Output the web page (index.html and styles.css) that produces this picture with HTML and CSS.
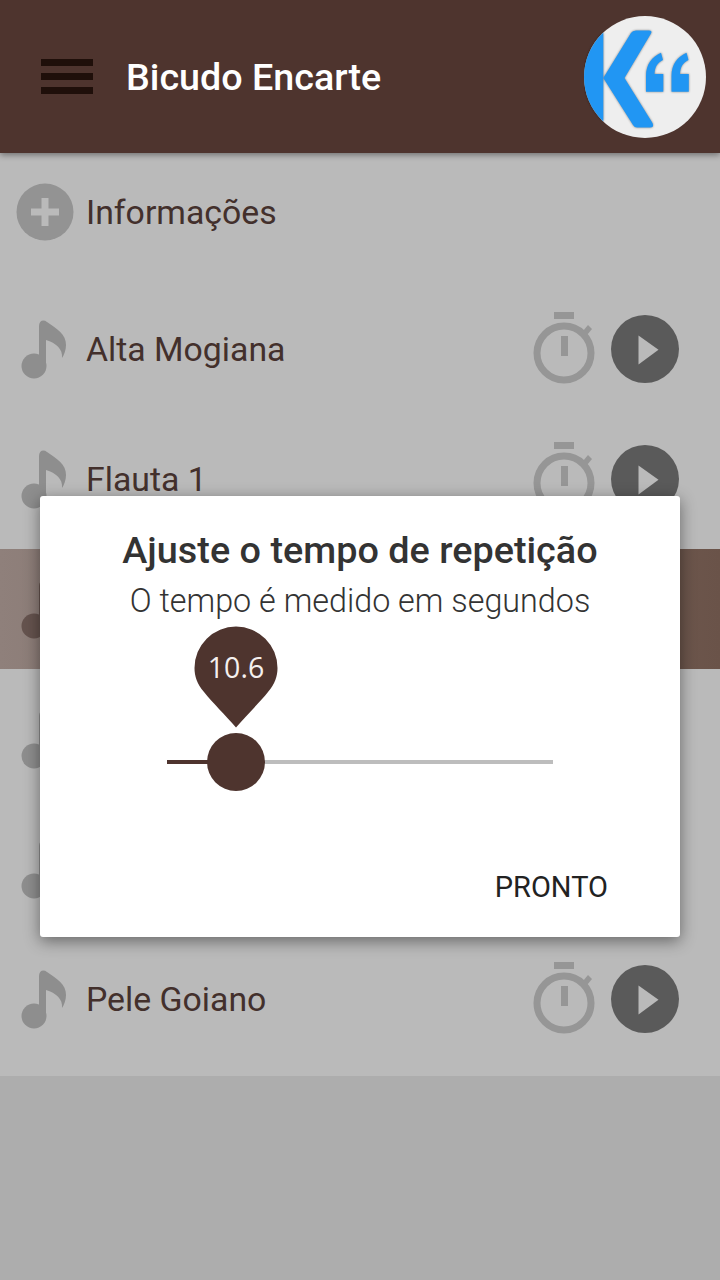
FILE: index.html
```html
<!DOCTYPE html>
<html lang="pt">
<head>
<meta charset="utf-8">
<title>Bicudo Encarte</title>
<link rel="stylesheet" href="styles.css">
</head>
<body>
<svg class="defs" width="0" height="0">
	<defs>
		<symbol id="note" viewBox="0 0 48 60">
			<circle cx="14" cy="47" r="12.5"/>
			<path d="M19 47V7C19 2 23 0 27 3C37 10 46 15 46 26C46 31 44 36 42 39C43 30 36 24 26 21V47Z"/>
		</symbol>
		<symbol id="timer" viewBox="0 0 64 74">
			<rect x="22" y="0" width="20" height="7"/>
			<circle cx="32" cy="41" r="27" fill="none" stroke="#969696" stroke-width="7"/>
			<rect x="29" y="24" width="7" height="20"/>
			<path d="M51 19L56 13L60 17L55 23Z"/>
		</symbol>
		<symbol id="play" viewBox="0 0 68 68">
			<circle cx="34" cy="34" r="34" fill="#5a5a5a"/>
			<path d="M27.500 20.500L47.500 34.800L27.500 49.500Z" fill="#bababa"/>
		</symbol>
	</defs>
</svg>

<div class="appbar">
	<div class="menu"><span></span><span></span><span></span></div>
	<div class="appbar-title">Bicudo Encarte</div>
	<svg class="logo" viewBox="0 0 122 122">
		<circle cx="61" cy="61" r="61" fill="#eeeeee"/>
		<g class="logo-mark">
			<path d="M19.300 16.500A61 61 0 0 0 19.300 105.500Z"/>
			<path d="M19.300 62L47 17Q48.500 14.500 52 14.500H65Q68.500 14.500 67 17.500L40.500 62L68.500 107Q70.500 111.500 66 111.500H53Q50.500 111.500 49 109Z"/>
			<path d="M62 75.700V60C62 48 68 41 77 36.700L79 44C73 47 71 51 70.500 58H79.300V75.700Z"/>
			<path d="M87.500 75.700V60C87.500 48 93.500 41 102.500 36.700L104.500 44C98.500 47 96.500 51 96 58H104.800V75.700Z"/>
		</g>
	</svg>
</div>

<div class="list">
	<div class="info-row">
		<svg class="plus" viewBox="0 0 58 58">
			<circle cx="29" cy="29" r="28.500" fill="#939393"/>
			<path d="M25.500 15h7v10.500H43v7H32.500V43h-7V32.500H15v-7h10.500z" fill="#bababa"/>
		</svg>
		<div class="label">Informações</div>
	</div>

	<div class="row">
		<svg class="note"><use href="#note"/></svg>
		<div class="label">Alta Mogiana</div>
		<svg class="timer"><use href="#timer"/></svg>
		<svg class="play"><use href="#play"/></svg>
	</div>
	<div class="row">
		<svg class="note"><use href="#note"/></svg>
		<div class="label">Flauta 1</div>
		<svg class="timer"><use href="#timer"/></svg>
		<svg class="play"><use href="#play"/></svg>
	</div>
	<div class="row selected">
		<svg class="note"><use href="#note"/></svg>
	</div>
	<div class="row">
		<svg class="note"><use href="#note"/></svg>
	</div>
	<div class="row">
		<svg class="note"><use href="#note"/></svg>
	</div>
	<div class="row">
		<svg class="note"><use href="#note"/></svg>
		<div class="label">Pele Goiano</div>
		<svg class="timer"><use href="#timer"/></svg>
		<svg class="play"><use href="#play"/></svg>
	</div>
</div>

<div class="dialog">
	<div class="dialog-title">Ajuste o tempo de repetição</div>
	<div class="dialog-text">O tempo é medido em segundos</div>
	<div class="slider">
		<div class="track"><div class="track-fill" style="width: 69px"></div></div>
		<div class="thumb" style="left: 69px"></div>
		<div class="pin" style="left: 69px">
			<svg class="pin-shape" viewBox="0 0 84 102">
				<path d="M42 101.500C32 90 18 76 10 66C3 58 0.500 50 0.500 42A41.500 41.500 0 0 1 83.500 42C83.500 50 81 58 74 66C66 76 52 90 42 101.500Z"/>
			</svg>
			<span class="pin-value">10.6</span>
		</div>
	</div>
	<div class="actions"><span class="done">PRONTO</span></div>
</div>
</body>
</html>
```

FILE: styles.css
```css
body {
	margin: 0;
	width: 720px;
	height: 1280px;
	overflow: hidden;
	position: relative;
	background: #adadad;
	font-family: Roboto, sans-serif;
}

.defs {
	position: absolute;
}

.appbar {
	height: 153px;
	display: flex;
	align-items: center;
	background: #4e342e;
	box-shadow: 0 2px 6px rgba(0, 0, 0, 0.4);
	position: relative;
	z-index: 1;
}

.menu {
	width: 52px;
	margin-left: 41px;
	display: flex;
	flex-direction: column;
	gap: 7px;
}

.menu span {
	height: 7px;
	background: #1f0f0a;
}

.appbar-title {
	margin-left: 33px;
	margin-top: 1px;
	font-size: 37.7px;
	font-weight: 500;
	color: #fff;
}

.logo {
	width: 122px;
	height: 122px;
	margin-left: auto;
	margin-right: 14px;
}

.logo-mark {
	fill: #2196f3;
	filter: drop-shadow(0 0 1px rgba(0, 0, 0, 0.45));
}

.list {
	display: flex;
	flex-direction: column;
	gap: 10px;
	padding-bottom: 17px;
	background: #bababa;
}

.info-row {
	height: 118px;
	margin-bottom: 8px;
	display: flex;
	align-items: center;
	padding-left: 16px;
}

.plus {
	width: 58px;
	height: 58px;
	margin-right: 12px;
}

.row {
	height: 120px;
	display: flex;
	align-items: center;
	padding-left: 20px;
	padding-right: 41px;
}

.row.selected {
	background: linear-gradient(to right, #8f807b, #6a5349);
}

.note {
	width: 48px;
	height: 60px;
	margin-right: 18px;
	fill: #8e8e8e;
}

.selected .note {
	fill: #65534e;
}

.label {
	font-size: 33.8px;
	color: #43302c;
}

.timer {
	width: 64px;
	height: 74px;
	margin-left: auto;
	margin-right: 15px;
	fill: #969696;
}

.play {
	width: 68px;
	height: 68px;
}

.dialog {
	position: absolute;
	left: 40px;
	top: 496px;
	width: 640px;
	height: 441px;
	background: #fff;
	border-radius: 3px;
	box-shadow: 0 4px 16px rgba(0, 0, 0, 0.45);
	z-index: 2;
}

.dialog-title {
	margin-top: 32px;
	line-height: 44px;
	text-align: center;
	font-size: 37.8px;
	font-weight: 500;
	color: #333;
}

.dialog-text {
	margin-top: 9px;
	line-height: 40px;
	text-align: center;
	font-size: 32.3px;
	font-weight: 300;
	color: #333;
}

.slider {
	position: relative;
	width: 386px;
	height: 4px;
	margin-top: 139px;
	margin-left: 127px;
}

.track {
	height: 4px;
	background: #bdbdbd;
}

.track-fill {
	height: 4px;
	background: #4e342e;
}

.thumb {
	position: absolute;
	top: -27px;
	width: 58px;
	height: 58px;
	margin-left: -29px;
	border-radius: 50%;
	background: #4e342e;
}

.pin {
	position: absolute;
	top: -134px;
	width: 84px;
	height: 102px;
	margin-left: -42px;
}

.pin-shape {
	display: block;
	width: 84px;
	height: 102px;
	fill: #4e342e;
}

.pin-value {
	position: absolute;
	left: 0;
	right: 0;
	top: 23px;
	line-height: 36px;
	text-align: center;
	font-family: "Open Sans", sans-serif;
	font-size: 28.5px;
	color: #f5f0ee;
}

.actions {
	margin-top: 105px;
	padding-right: 72px;
	display: flex;
	justify-content: flex-end;
}

.done {
	font-size: 29px;
	line-height: 36px;
	color: #222;
}
```
